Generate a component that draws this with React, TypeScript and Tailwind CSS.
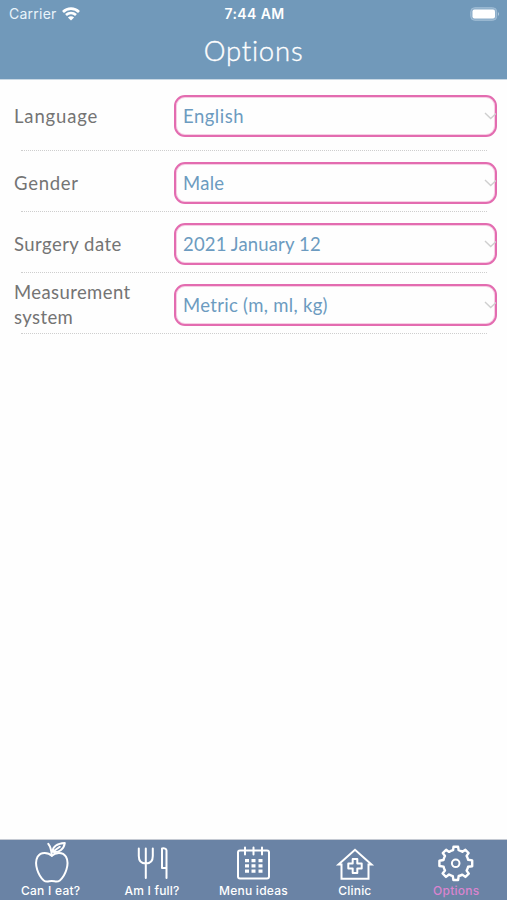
import type { ReactNode } from "react";

type Option = { label: string; value: string; row: string; labelSpacing: string; valueSpacing: string };

const options: Option[] = [
  { label: "Language", value: "English", row: "h-[71px] pt-[15px]", labelSpacing: "tracking-[0.85px]", valueSpacing: "tracking-[0.5px]" },
  { label: "Gender", value: "Male", row: "h-[61px] pt-[11px]", labelSpacing: "tracking-[0.75px]", valueSpacing: "tracking-[0.3px]" },
  { label: "Surgery date", value: "2021 January 12", row: "h-[61px] pt-[11px]", labelSpacing: "tracking-[0.45px]", valueSpacing: "tracking-[0.15px]" },
  { label: "Measurement system", value: "Metric (m, ml, kg)", row: "h-[61px] pt-[11px]", labelSpacing: "tracking-[0.4px]", valueSpacing: "tracking-[0.3px]" },
];

function OptionRow({ label, value, row, labelSpacing, valueSpacing }: Option) {
  return (
    <div className={`relative flex pl-[14px] pr-[10px] ${row}`}>
      <div className={`flex h-[42px] w-[160px] items-center pr-5 text-[18.5px] leading-[25px] text-[#747474] ${labelSpacing}`}>
        {label}
      </div>
      <button className="relative flex h-[42px] flex-1 items-center rounded-[11px] border-2 border-[#e36cb0] pl-[7px] pt-px text-[18.5px] text-[#6c9bc0] shadow-[inset_0_0_0_1px_#f6cfe4]">
        <span className={valueSpacing}>{value}</span>
        <svg className="absolute -right-[1px] top-[15px]" width="12" height="8" viewBox="0 0 12 8" fill="none" stroke="#cfcfcf" strokeWidth="1.4">
          <path d="M1 1l5.7 5.5L12 1.5" />
        </svg>
      </button>
      <div className="absolute bottom-0 left-[21px] right-[20px] border-b border-dotted border-[#cecece]" />
    </div>
  );
}

function Icon({ children }: { children: ReactNode }) {
  return (
    <svg width="40" height="43" viewBox="0 -1 40 43" fill="none" stroke="#fff" strokeWidth="2" strokeLinejoin="round" strokeLinecap="round">
      {children}
    </svg>
  );
}

const tabs = [
  {
    label: "Can I eat?",
    style: "tracking-[0.25px] text-white",
    icon: (
      <g transform="translate(.8 .3)">
        <path d="M20 14.5C16.5 11 9 10.2 5.8 15.5C1.8 22.5 6.5 34.5 12 39.2C15 41.5 17 39.6 20 39.6S25 41.5 28 39.2C33.5 34.5 38.2 22.5 34.2 15.5C31 10.2 23.5 11 20 14.5Z" />
        <path d="M16.5 2.5C18.5 5 19.7 9 20 14.5M21 10.5C20.5 5.5 25 2.3 33 1.8C32 8 27 11.8 21 10.5L28 5.5" />
      </g>
    ),
  },
  {
    label: "Am I full?",
    style: "tracking-[0.2px] text-white",
    icon: (
      <g transform="translate(.8 0)">
        <path d="M6 7.5V15C6 19.5 8.5 22.5 13 22.5S20 19.5 20 15V7.5M13 7.5V37" />
        <path d="M29.2 7.5C31.5 7 33.7 7.5 33.7 9.5V37M29.2 7.5V27H33.7" />
      </g>
    ),
  },
  {
    label: "Menu ideas",
    style: "tracking-[0.25px] text-white",
    icon: (
      <>
        <rect x="5" y="9.5" width="31" height="28" rx="2" />
        <path d="M12 6.5V13.5M20.5 6.5V13.5M29 6.5V13.5" />
        <path stroke="none" fill="#fff" d="M12 18h4v3.2h-4zM18.5 18h4v3.2h-4zM25.5 18h4v3.2h-4zM12 23.3h4v3.2h-4zM18.5 23.3h4v3.2h-4zM25.5 23.3h4v3.2h-4zM12 28.6h4v3.2h-4zM18.5 28.6h4v3.2h-4zM25.5 28.6h4v3.2h-4z" />
      </>
    ),
  },
  {
    label: "Clinic",
    style: "tracking-[0.2px] text-white",
    icon: (
      <>
        <path d="M3.5 23.5L20 8.8L36.5 23.5H33.5V37.7H6.5V23.5Z" strokeLinejoin="miter" />
        <path d="M17.7 18h4.6v4.6h4.4v4.8h-4.4v4.6h-4.6v-4.6h-4.4v-4.8h4.4z" />
      </>
    ),
  },
  {
    label: "Options",
    style: "tracking-[0.25px] text-[#da84cf]",
    icon: (
      <g transform="translate(-.8 -.2)">
        <path strokeWidth="2.4" d="M17.9 9.4L18.3 6H22.9L23.4 9.4C24.9 9.8 26.1 10.3 27.2 11L30.2 9L33.4 12.2L31.4 15.1C32.1 16.3 32.6 17.5 32.9 18.9L37 19.6V25.4L32.9 25.9C32.6 27.3 32.1 28.6 31.4 29.8L33.6 32.9L30.2 36.1L27.1 33.8C26 34.4 24.8 34.9 23.5 35.2L22.9 39.2H18.2L17.6 35.3C16.3 35 15 34.5 13.8 33.7L10.8 36.1L7.4 32.7L9.8 29.6C9.1 28.5 8.6 27.2 8.4 25.8L4.2 25.2V20L8.3 19.2C8.6 17.7 9.1 16.4 9.8 15.2L7.6 12.2L10.9 9L13.9 11.1C15.1 10.3 16.4 9.8 17.9 9.4Z" />
        <circle cx="20.5" cy="22.5" r="3.8" />
      </g>
    ),
  },
];

export default function App() {
  return (
    <div className="flex h-[900px] w-[507px] flex-col overflow-hidden bg-[#fefefe] font-[Lato,sans-serif]">
      <header className="h-[79px] bg-[#7199ba] text-white">
        <div className="grid h-[27px] grid-cols-3 items-center pl-[9px] pr-[7px] font-[Inter,sans-serif]">
          <div className="flex items-center gap-[5px] text-[14px] tracking-[0.25px] text-[#e9f4fb]">
            Carrier
            <svg width="18" height="14" viewBox="0 0 18 14" fill="none" stroke="#fff" strokeWidth="2.7">
              <path d="M1 4.9C5.5.6 12.5.6 17 4.9M4 8.1C7 5.4 11 5.4 14 8.1" />
              <path d="M9 13.5L5.9 10.5C7.7 8.9 10.3 8.9 12.1 10.5Z" fill="#fff" stroke="none" />
            </svg>
          </div>
          <div className="text-center text-[14px] font-semibold tracking-[0.4px]">7:44 AM</div>
          <svg className="justify-self-end" width="30" height="14" viewBox="0 0 30 14">
            <rect x=".7" y=".7" width="26" height="12.6" rx="4" fill="#8eafcb" stroke="#a0bdd5" />
            <rect x="2.5" y="2.5" width="22.5" height="9" rx="2" fill="#fff" />
            <path d="M28 5Q30 7 28 9Z" fill="#b4cbdd" />
          </svg>
        </div>
        <h1 className="text-center text-[27.5px] leading-[47px] font-light tracking-[0.8px] [-webkit-text-stroke:0.35px_white]">Options</h1>
      </header>
      <div className="h-px bg-[#c9d8e4]" />
      <main className="flex-1">
        {options.map((option) => (
          <OptionRow key={option.label} {...option} />
        ))}
      </main>
      <nav className="grid h-[61px] grid-cols-5 border-t border-[#c5cad3] bg-[#6a83a5] font-[Inter,sans-serif]">
        {tabs.map((tab) => (
          <button key={tab.label} className="flex flex-col items-center">
            <Icon>{tab.icon}</Icon>
            <span className={`text-[12px] leading-[15px] font-medium ${tab.style}`}>{tab.label}</span>
          </button>
        ))}
      </nav>
    </div>
  );
}
